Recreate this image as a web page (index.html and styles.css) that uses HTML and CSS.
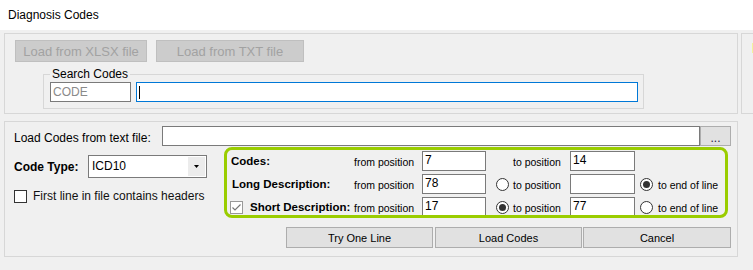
FILE: index.html
```html
<!DOCTYPE html>
<html lang="en">

<head>
  <meta charset="UTF-8" />
  <meta name="viewport" content="width=device-width, initial-scale=1.0" />
  <title>Diagnosis Codes</title>
  <link rel="stylesheet" href="styles.css">
</head>

<body>
  <div class="titlebar">Diagnosis Codes</div>

  <div class="main">
    <div class="top-row">
      <div class="panel panel-search">
        <div class="load-buttons">
          <button class="btn btn-disabled btn-xlsx">Load from XLSX file</button>
          <button class="btn btn-disabled btn-txt">Load from TXT file</button>
        </div>
        <fieldset class="search-group">
          <legend>Search Codes</legend>
          <div class="field field-code">CODE</div>
          <div class="field field-search"><span class="caret"></span></div>
        </fieldset>
      </div>
      <div class="panel panel-side"><span class="side-mark"></span></div>
    </div>

    <div class="panel panel-load">
      <div class="file-row">
        <span class="file-label">Load Codes from text file:</span>
        <div class="field field-file"></div>
        <button class="btn btn-browse">...</button>
      </div>

      <div class="options-row">
        <div class="options-left">
          <div class="type-row">
            <span class="bold-label">Code Type:</span>
            <div class="combo">
              <span class="combo-value">ICD10</span>
              <span class="combo-arrow">
                <svg width="5" height="3" viewBox="0 0 5 3"><path d="M0 0h5L2.5 3z" fill="#000" /></svg>
              </span>
            </div>
          </div>
          <div class="check-row">
            <svg class="check" width="13" height="13" viewBox="0 0 13 13">
              <rect x="0.5" y="0.5" width="12" height="12" fill="#fff" stroke="#333" />
            </svg>
            <span>First line in file contains headers</span>
          </div>
        </div>

        <div class="positions">
          <!-- codes -->
          <span class="pos-label pos-codes">Codes:</span>
          <span class="small-text">from position</span>
          <div class="field pos-field">7</div>
          <span></span>
          <span class="small-text">to position</span>
          <div class="field pos-field">14</div>
          <span></span>
          <span></span>

          <!-- long description -->
          <span class="pos-label pos-long">Long Description:</span>
          <span class="small-text">from position</span>
          <div class="field pos-field">78</div>
          <svg class="radio radio-to" width="13" height="13" viewBox="0 0 13 13">
            <circle cx="6.5" cy="6.5" r="6" fill="#fff" stroke="#333" />
          </svg>
          <span class="small-text">to position</span>
          <div class="field pos-field"></div>
          <svg class="radio radio-end" width="13" height="13" viewBox="0 0 13 13">
            <circle cx="6.5" cy="6.5" r="6" fill="#fff" stroke="#333" />
            <circle cx="6.5" cy="6.5" r="3.5" fill="#333" />
          </svg>
          <span class="small-text">to end of line</span>

          <!-- short description -->
          <span class="pos-label pos-short">
            <svg class="check" width="13" height="13" viewBox="0 0 13 13">
              <rect x="0.5" y="0.5" width="12" height="12" fill="#fff" stroke="#999" />
              <path d="M2.5 6.5L5 9L10.5 3.5" fill="none" stroke="#777" stroke-width="1.2" />
            </svg>
            Short Description:
          </span>
          <span class="small-text">from position</span>
          <div class="field pos-field">17</div>
          <svg class="radio radio-to" width="13" height="13" viewBox="0 0 13 13">
            <circle cx="6.5" cy="6.5" r="6" fill="#fff" stroke="#333" />
            <circle cx="6.5" cy="6.5" r="3.5" fill="#333" />
          </svg>
          <span class="small-text">to position</span>
          <div class="field pos-field">77</div>
          <svg class="radio radio-end" width="13" height="13" viewBox="0 0 13 13">
            <circle cx="6.5" cy="6.5" r="6" fill="#fff" stroke="#333" />
          </svg>
          <span class="small-text">to end of line</span>
        </div>
      </div>

      <div class="action-row">
        <button class="btn btn-action btn-try">Try One Line</button>
        <button class="btn btn-action btn-load">Load Codes</button>
        <button class="btn btn-action btn-cancel">Cancel</button>
      </div>
    </div>
  </div>
</body>

</html>
```

FILE: styles.css
```css
/* Window */
body {
  margin: 0;
  width: 753px;
  height: 270px;
  overflow: hidden;
  background: #f0f0f0;
  font-family: 'Liberation Sans', Arial, sans-serif;
  font-size: 12px;
  color: #000;
}

.titlebar {
  height: 30px;
  line-height: 30px;
  padding-left: 8px;
  background: #fff;
}

.main {
  padding: 3px 0 0 4px;
}

.panel {
  box-sizing: border-box;
  border: 1px solid #d7d7d7;
}

/* Top row */
.top-row {
  display: flex;
  gap: 3px;
}

.panel-search {
  flex: none;
  width: 734px;
  height: 81px;
  padding: 6px 0 0 10px;
}

.panel-side {
  flex: none;
  width: 40px;
  height: 81px;
  padding: 9px 0 0 10px;
}

.side-mark {
  display: block;
  width: 4px;
  height: 10px;
  background: #f3f39c;
}

/* Buttons */
.btn {
  box-sizing: border-box;
  margin: 0;
  padding: 0;
  font-family: inherit;
  color: #000;
  background: #e1e1e1;
  border: 1px solid #adadad;
}

.load-buttons {
  display: flex;
  gap: 9px;
}

.btn-disabled {
  height: 22px;
  font-size: 13px;
  color: #a2a2a2;
  background: #cccccc;
  border-color: #bfbfbf;
}

.btn-xlsx {
  width: 132px;
}

.btn-txt {
  width: 148px;
}

/* Search group */
.search-group {
  display: flex;
  gap: 5px;
  width: 601px;
  box-sizing: border-box;
  margin: 5px 0 0 28px;
  padding: 1px 5px 6px 6px;
  border: 1px solid #d7d7d7;
  min-width: 0;
}

.search-group legend {
  padding: 0 2px;
  line-height: 14px;
  font-size: 12px;
}

.field {
  box-sizing: border-box;
  height: 20px;
  line-height: 18px;
  padding: 0 2px;
  background: #fff;
  border: 1px solid #7a7a7a;
  white-space: nowrap;
}

.field-code {
  width: 81px;
  color: #8a8a8a;
}

.field-search {
  width: 502px;
  border-color: #0078d7;
  display: flex;
  align-items: center;
}

.caret {
  width: 1px;
  height: 13px;
  background: #000;
}

/* Load panel */
.panel-load {
  width: 734px;
  height: 136px;
  margin-top: 7px;
  padding: 4px 6px 0 9px;
}

.file-row {
  display: flex;
  align-items: flex-start;
}

.file-label {
  width: 148px;
  padding-top: 5px;
  line-height: 14px;
}

.field-file {
  width: 538px;
}

.btn-browse {
  width: 31px;
  height: 20px;
  line-height: 22px;
  font-size: 12px;
  color: #2a1a40;
}

.options-row {
  display: flex;
  margin-top: 1px;
}

.options-left {
  width: 210px;
  padding-top: 8px;
}

.type-row {
  display: flex;
  align-items: center;
}

.bold-label {
  font-weight: bold;
  width: 74px;
}

.combo {
  box-sizing: border-box;
  display: flex;
  width: 119px;
  height: 23px;
  background: #fff;
  border: 1px solid #7a7a7a;
}

.combo-value {
  flex: 1;
  padding-left: 3px;
  line-height: 21px;
}

.combo-arrow {
  width: 17px;
  display: flex;
  align-items: center;
  justify-content: center;
  background: #ececec;
  margin: 1px;
}

.check-row {
  display: flex;
  align-items: center;
  gap: 6px;
  margin-top: 11px;
  color: #111;
}

.check {
  flex: none;
  display: block;
}

/* Position grid */
.positions {
  box-sizing: border-box;
  width: 504px;
  height: 71px;
  overflow: hidden;
  padding: 1px 0 0 3px;
  border: 3px solid #9acd00;
  border-radius: 8px;
  display: grid;
  grid-template-columns: 124px 68px 64px 27px 57px 65px 23px auto;
  grid-auto-rows: 20px;
  row-gap: 3px;
  align-items: center;
}

.pos-label {
  font-weight: bold;
  font-size: 11.5px;
  white-space: nowrap;
}

.pos-codes {
  padding-left: 1px;
}

.pos-long {
  padding-left: 2px;
}

.pos-short {
  display: flex;
  align-items: center;
  gap: 7px;
}

.small-text {
  font-size: 10.5px;
  white-space: nowrap;
  padding-top: 2px;
}

.pos-field {
  line-height: 16px;
}

.radio {
  display: block;
  justify-self: end;
}

.radio-to {
  margin-right: 4px;
}

.radio-end {
  margin-right: 5px;
}

/* Actions */
.action-row {
  display: flex;
  justify-content: flex-end;
  margin-top: 9px;
}

.btn-action {
  height: 21px;
  font-size: 11px;
}

.btn-try {
  width: 147px;
}

.btn-load {
  width: 147px;
  margin-left: 2px;
}

.btn-cancel {
  width: 148px;
  margin-left: 1px;
}
```
